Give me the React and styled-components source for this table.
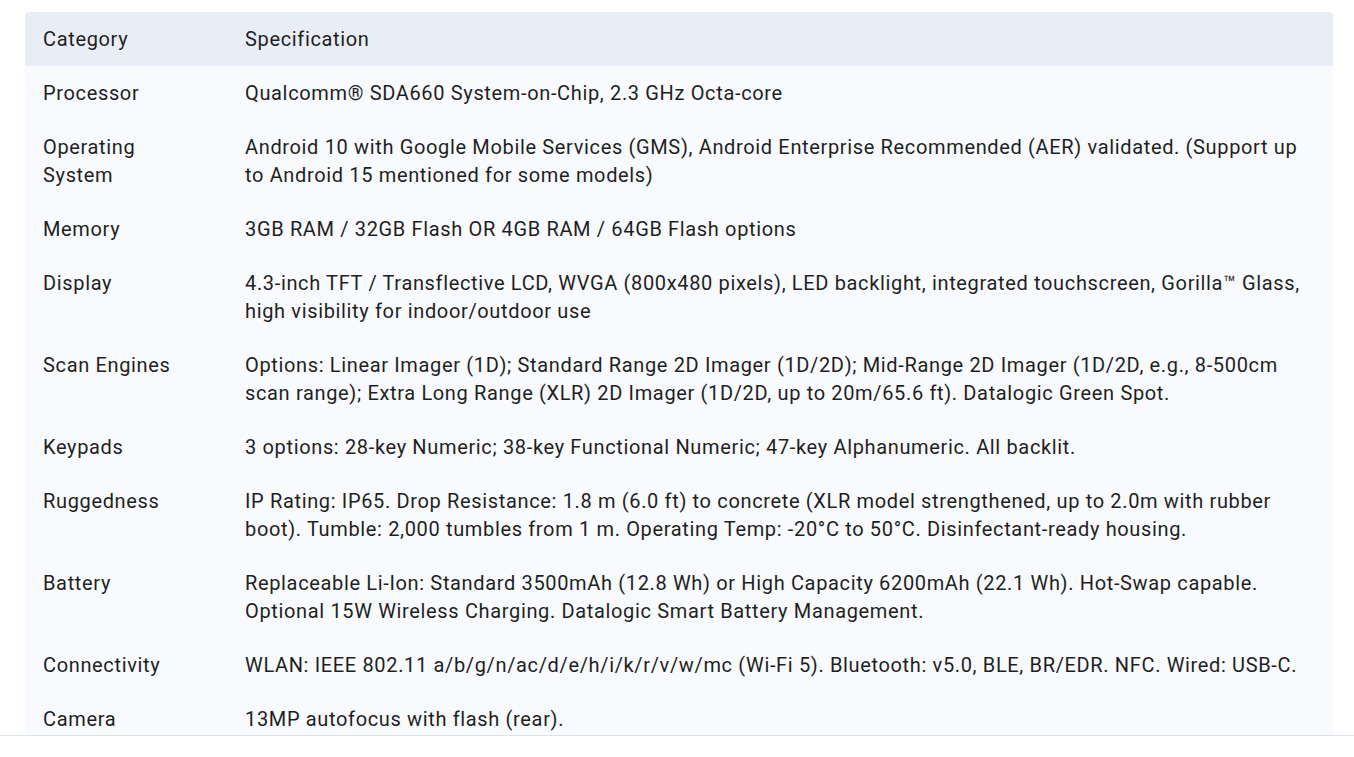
import React from 'react';
import styled, { createGlobalStyle } from 'styled-components';

const Global = createGlobalStyle`
  html, body { margin: 0; padding: 0; background: #ffffff; }
  body {
    font-family: Roboto, "Noto Sans", "Liberation Sans", sans-serif;
    color: #1f1f1f;
    -webkit-font-smoothing: antialiased;
  }
`;

const Page = styled.div`
  height: 757px;
  display: flex;
  flex-direction: column;
  overflow: hidden;
`;

const ScrollArea = styled.div`
  flex: 0 0 735px;
  box-sizing: border-box;
  overflow: hidden;
  padding: 12px 21px 0 25px;
`;

const Footer = styled.div`
  flex: 1;
  border-top: 1px solid #dde3ea;
  background: #ffffff;
`;

const Table = styled.table`
  width: 100%;
  table-layout: fixed;
  border-collapse: separate;
  border-spacing: 0;
  font-size: 20px;
  line-height: 28px;
  letter-spacing: 0.65px;
`;

const HeadCell = styled.th`
  background: #e9eef6;
  padding: 13px 18px;
  text-align: left;
  font-weight: 400;
  ${(p) => (p.$narrow ? 'width: 160px; padding-right: 24px;' : '')}
  &:first-child { border-top-left-radius: 4px; }
  &:last-child { border-top-right-radius: 4px; }
`;

const Cell = styled.td`
  background: #f8fafd;
  padding: 13px 18px;
  vertical-align: top;
  text-align: left;
  &:first-child { padding-right: 24px; }
`;

const rows = [
  ['Processor', 'Qualcomm® SDA660 System-on-Chip, 2.3 GHz Octa-core'],
  ['Operating System', 'Android 10 with Google Mobile Services (GMS), Android Enterprise Recommended (AER) validated. (Support up to Android 15 mentioned for some models)'],
  ['Memory', '3GB RAM / 32GB Flash OR 4GB RAM / 64GB Flash options'],
  ['Display', '4.3-inch TFT / Transflective LCD, WVGA (800x480 pixels), LED backlight, integrated touchscreen, Gorilla™ Glass, high visibility for indoor/outdoor use'],
  ['Scan Engines', 'Options: Linear Imager (1D); Standard Range 2D Imager (1D/2D); Mid-Range 2D Imager (1D/2D, e.g., 8-500cm scan range); Extra Long Range (XLR) 2D Imager (1D/2D, up to 20m/65.6 ft). Datalogic Green Spot.'],
  ['Keypads', '3 options: 28-key Numeric; 38-key Functional Numeric; 47-key Alphanumeric. All backlit.'],
  ['Ruggedness', 'IP Rating: IP65. Drop Resistance: 1.8 m (6.0 ft) to concrete (XLR model strengthened, up to 2.0m with rubber boot). Tumble: 2,000 tumbles from 1 m. Operating Temp: -20°C to 50°C. Disinfectant-ready housing.'],
  ['Battery', 'Replaceable Li-Ion: Standard 3500mAh (12.8 Wh) or High Capacity 6200mAh (22.1 Wh). Hot-Swap capable. Optional 15W Wireless Charging. Datalogic Smart Battery Management.'],
  ['Connectivity', 'WLAN: IEEE 802.11 a/b/g/n/ac/d/e/h/i/k/r/v/w/mc (Wi-Fi 5). Bluetooth: v5.0, BLE, BR/EDR. NFC. Wired: USB-C.'],
  ['Camera', '13MP autofocus with flash (rear).'],
];

export default function App() {
  return (
    <>
      <Global />
      <Page>
        <ScrollArea>
          <Table>
            <thead>
              <tr>
                <HeadCell $narrow>Category</HeadCell>
                <HeadCell>Specification</HeadCell>
              </tr>
            </thead>
            <tbody>
              {rows.map(([k, v]) => (
                <tr key={k}>
                  <Cell>{k}</Cell>
                  <Cell>{v}</Cell>
                </tr>
              ))}
            </tbody>
          </Table>
        </ScrollArea>
        <Footer />
      </Page>
    </>
  );
}
